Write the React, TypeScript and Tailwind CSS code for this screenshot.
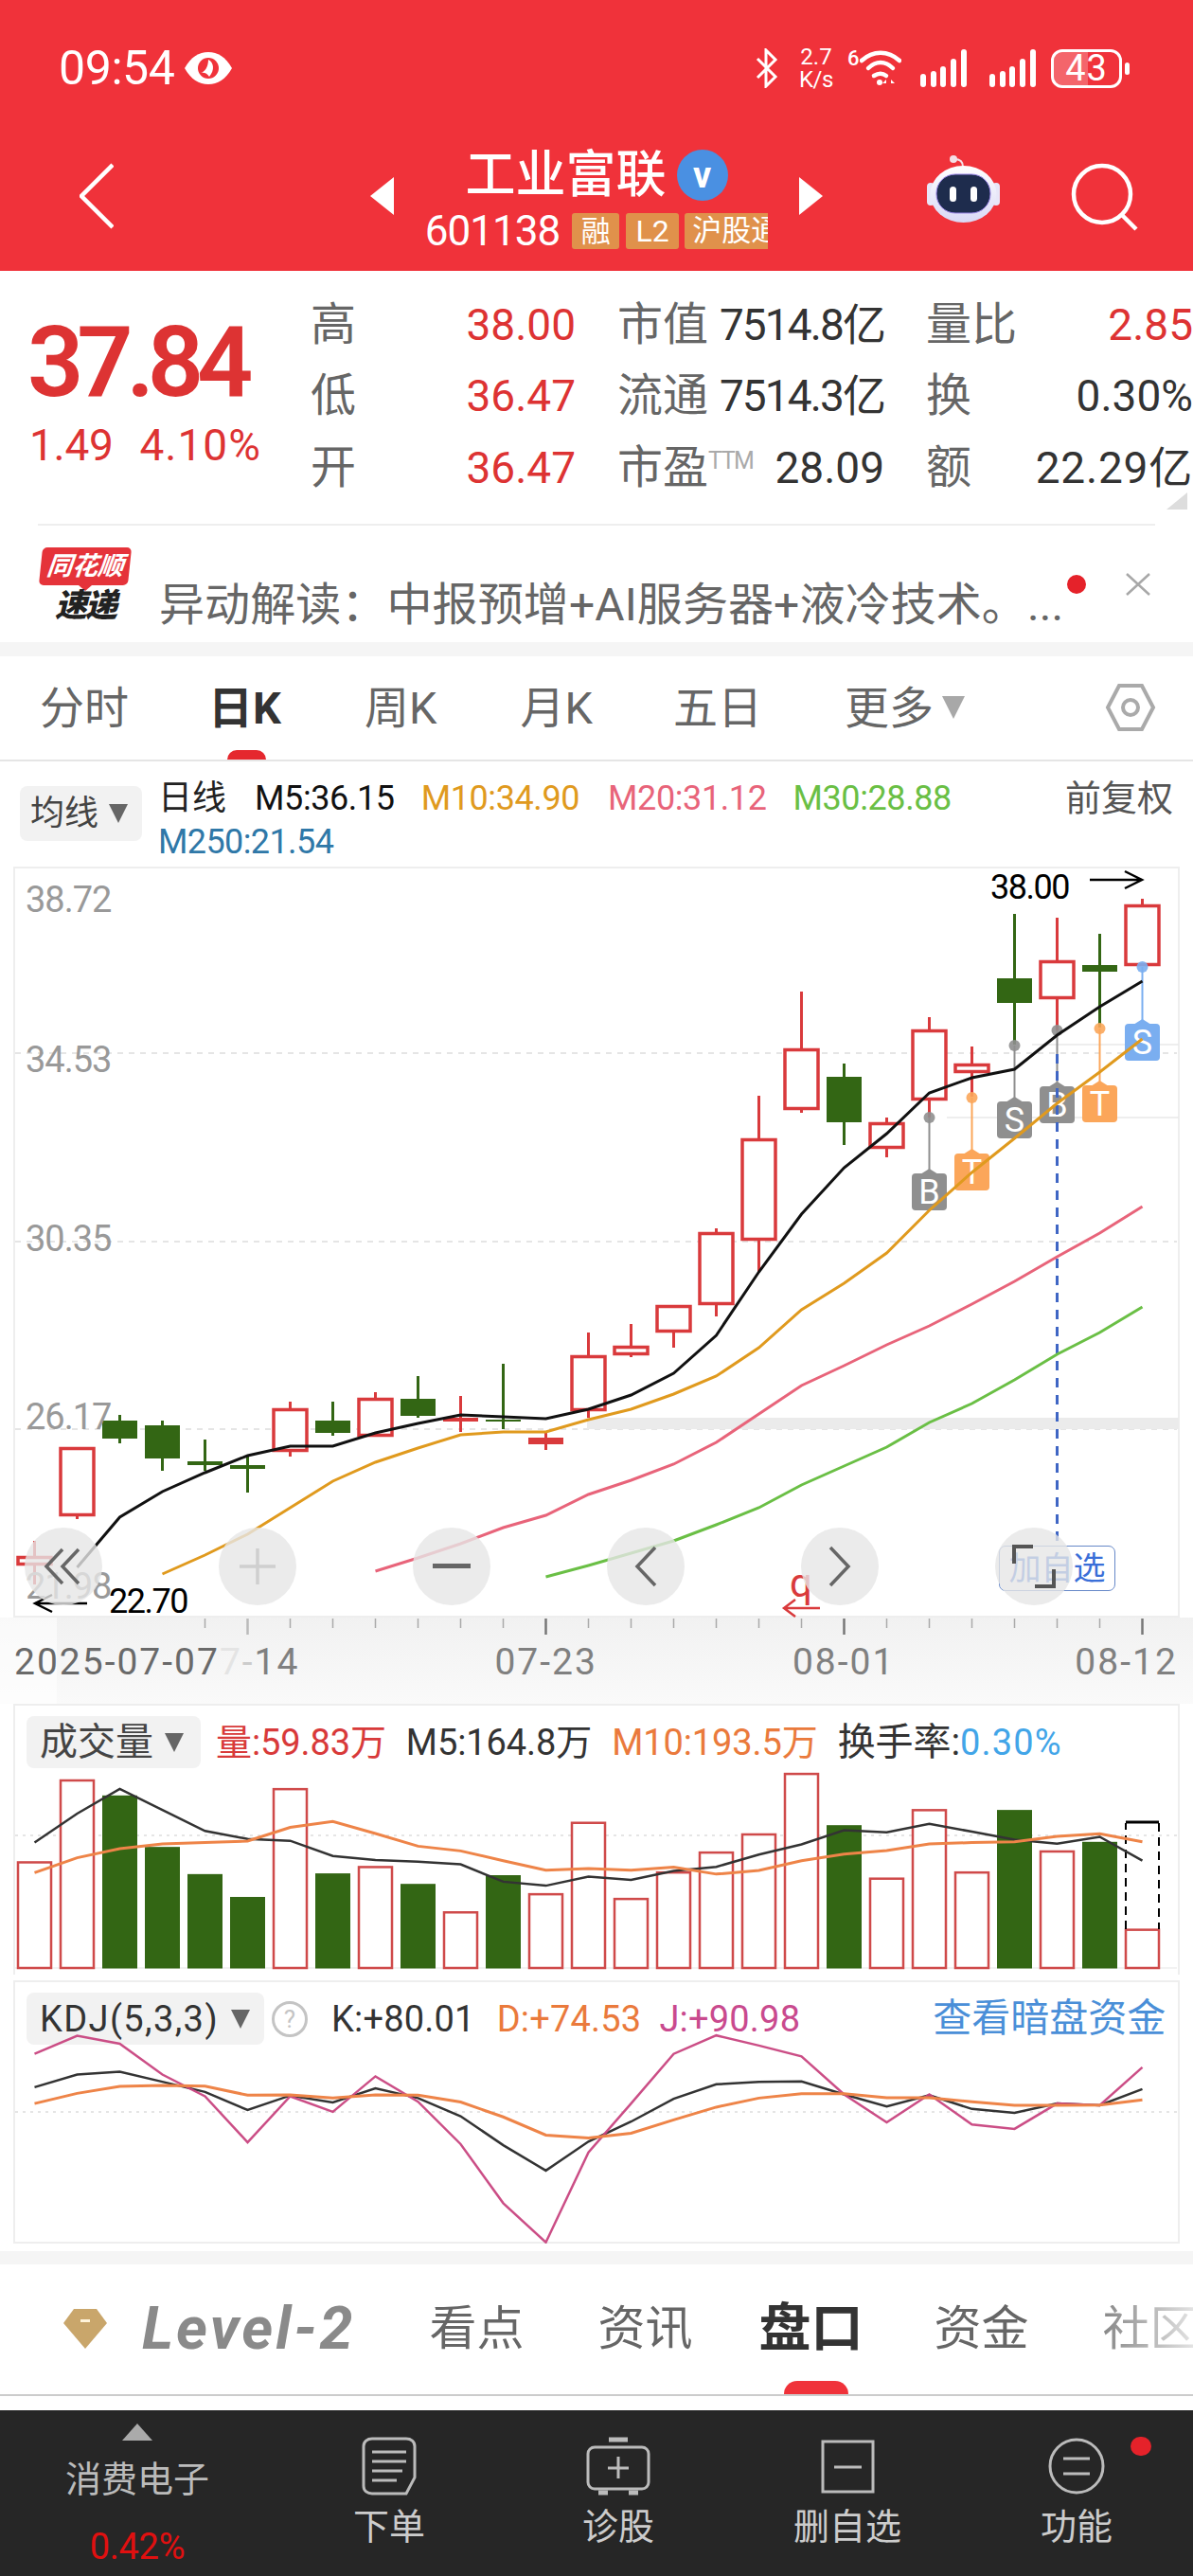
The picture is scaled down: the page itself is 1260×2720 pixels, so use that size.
import React from "react";

const X = (i: number) => 36.5 + 45 * i;
const pts = (list: [number, number][]) => list.map((p) => p.join(",")).join(" ");
const series = (ys: number[], toY: (z: number) => number) =>
  ys.map((z, i) => `${X(i)},${toY(z)}`).join(" ");

// kind, body top, body bottom, wick top, wick bottom
type Candle = ["r" | "g" | "R", number, number, number, number];
const candles: Candle[] = [
  ["r", 1643, 1653, 1627, 1673],
  ["r", 1528, 1601, 1528, 1604],
  ["g", 1500, 1519, 1494, 1524],
  ["g", 1505, 1540, 1500, 1553],
  ["g", 1543, 1547, 1520, 1553],
  ["g", 1547, 1551, 1538, 1576],
  ["r", 1487, 1533, 1480, 1538],
  ["g", 1500, 1513, 1480, 1516],
  ["r", 1476, 1517, 1470, 1517],
  ["g", 1477, 1495, 1453, 1497],
  ["R", 1497, 1501, 1474, 1512],
  ["g", 1499, 1501, 1440, 1509],
  ["R", 1518, 1525, 1513, 1531],
  ["r", 1431, 1490, 1407, 1497],
  ["r", 1421, 1431, 1398, 1433],
  ["r", 1378, 1407, 1378, 1423],
  ["r", 1301, 1378, 1297, 1390],
  ["r", 1202, 1310, 1157, 1343],
  ["r", 1107, 1172, 1047, 1175],
  ["g", 1137, 1185, 1123, 1209],
  ["r", 1185, 1213, 1180, 1222],
  ["r", 1087, 1162, 1074, 1180],
  ["r", 1123, 1133, 1105, 1158],
  ["g", 1033, 1059, 965, 1103],
  ["r", 1014, 1055, 969, 1088],
  ["g", 1019, 1026, 986, 1085],
  ["r", 955, 1020, 949, 1020],
];

const ma5: [number, number][] = [
  [81.5, 1655], [126.5, 1602], [171.5, 1575], [216.5, 1555], [261.5, 1537], [306.5, 1527], [351.5, 1527],
  [396.5, 1513], [441.5, 1503], [486.5, 1494], [531.5, 1496], [576.5, 1498], [621.5, 1488], [666.5, 1473],
  [711.5, 1450], [756.5, 1410], [801.5, 1343], [846.5, 1282], [891.5, 1233], [936.5, 1197], [981.5, 1154],
  [1026.5, 1138], [1071.5, 1129], [1116.5, 1093], [1161.5, 1063], [1206.5, 1036],
];
const ma10: [number, number][] = [
  [171.5, 1662], [216.5, 1642], [261.5, 1620], [306.5, 1592], [351.5, 1564], [396.5, 1544], [441.5, 1529],
  [486.5, 1515], [531.5, 1512], [576.5, 1512], [621.5, 1499], [666.5, 1488], [711.5, 1472], [756.5, 1453],
  [801.5, 1423], [846.5, 1383], [891.5, 1355], [936.5, 1323], [981.5, 1278], [1026.5, 1238], [1071.5, 1202],
  [1116.5, 1165], [1161.5, 1132], [1206.5, 1097],
];
const ma20: [number, number][] = [
  [396.5, 1659], [441.5, 1645], [486.5, 1630], [531.5, 1613], [576.5, 1600], [621.5, 1578], [666.5, 1563],
  [711.5, 1546], [756.5, 1523], [801.5, 1493], [846.5, 1463], [891.5, 1442], [936.5, 1420], [981.5, 1400],
  [1026.5, 1377], [1071.5, 1353], [1116.5, 1327], [1161.5, 1302], [1206.5, 1274],
];
const ma30: [number, number][] = [
  [576.5, 1665], [621.5, 1653], [666.5, 1640], [711.5, 1627], [756.5, 1610], [801.5, 1592], [846.5, 1568],
  [891.5, 1548], [936.5, 1528], [981.5, 1502], [1026.5, 1482], [1071.5, 1457], [1116.5, 1430], [1161.5, 1407],
  [1206.5, 1380],
];

const marks = [
  { x: 981.5, dot: 1180, box: 1239, label: "B", color: "#8f8f8f" },
  { x: 1026.5, dot: 1159, box: 1218, label: "T", color: "#fba65a" },
  { x: 1071.5, dot: 1104, box: 1163, label: "S", color: "#8f8f8f" },
  { x: 1116.5, dot: 1088, box: 1147, label: "B", color: "#8f8f8f" },
  { x: 1161.5, dot: 1086, box: 1146, label: "T", color: "#fba65a" },
  { x: 1206.5, dot: 1021, box: 1081, label: "S", color: "#7aaef0" },
];

const volTops = [482, 256, 300, 442, 517, 580, 280, 515, 495, 544, 620, 520, 570, 373, 583, 510, 455, 405, 238, 382, 527, 338, 510, 340, 452, 428, 668];
const volGreen = [2, 3, 4, 5, 7, 9, 11, 19, 23, 25];
const volBlack = [430, 350, 282, 340, 398, 420, 425, 467, 478, 483, 490, 538, 549, 524, 533, 508, 497, 463, 435, 396, 402, 378, 400, 422, 433, 414, 480];
const volOrange = [513, 472, 447, 434, 430, 426, 388, 372, 405, 440, 453, 480, 506, 502, 506, 498, 517, 507, 480, 462, 452, 434, 430, 428, 413, 406, 428];

const kBlack = [1105, 1070, 1062, 1090, 1118, 1168, 1128, 1147, 1108, 1135, 1185, 1265, 1335, 1255, 1200, 1137, 1097, 1090, 1089, 1125, 1158, 1127, 1165, 1176, 1150, 1155, 1110];
const kOrange = [1150, 1122, 1103, 1100, 1102, 1127, 1126, 1135, 1126, 1127, 1146, 1187, 1237, 1245, 1232, 1195, 1160, 1135, 1123, 1123, 1134, 1134, 1145, 1155, 1155, 1154, 1140];
const kPink = [1013, 963, 985, 1070, 1130, 1257, 1130, 1173, 1075, 1145, 1262, 1425, 1533, 1285, 1150, 1013, 962, 990, 1020, 1125, 1202, 1125, 1208, 1220, 1150, 1155, 1050];

const panelY = (z: number) => 1780 + z / 2.613;

function Caret({ className = "" }: { className?: string }) {
  return (
    <svg viewBox="0 0 20 20" className={className}>
      <path d="M0 0H20L10 20Z" fill="currentColor" />
    </svg>
  );
}

function Signal() {
  return (
    <svg width="49" height="40" viewBox="0 0 49 40" fill="#fff">
      <rect x="0" y="26" width="6" height="14" rx="3" />
      <rect x="11" y="23" width="6" height="17" rx="3" />
      <rect x="21" y="18" width="6" height="22" rx="3" />
      <rect x="32" y="10" width="6" height="30" rx="3" />
      <rect x="43" y="0" width="6" height="40" rx="3" />
    </svg>
  );
}

function StatusBar() {
  return (
    <div className="h-[148px] pt-[49px] pl-[62px] flex items-start text-white">
      <div className="flex items-center h-[46px] w-[188px] shrink-0">
        <span className="text-[50px] leading-none tracking-[-0.4px]">09:54</span>
        <svg width="52" height="36" viewBox="0 0 52 36" className="ml-[9px]">
          <path d="M1 18C8 6 16 1 26 1s18 5 25 17c-7 12-15 17-25 17S8 30 1 18Z" fill="#fff" />
          <circle cx="26" cy="18" r="11" fill="#f0323a" />
          <path d="M26 9c6 3 7 11 1 18-2-4-6-5-9-4 4-1 8-6 8-14Z" fill="#fff" />
        </svg>
      </div>
      <div className="flex items-center h-[46px] ml-[547px]">
        <svg width="26" height="42" viewBox="0 0 26 42" fill="none" stroke="#fff" strokeWidth="3">
          <path d="M3 11 22 30 12 40V2l10 10L3 31" />
        </svg>
        <div className="ml-[19px] w-[40px] flex flex-col items-center text-[24px] leading-[24px]">
          <span>2.7</span>
          <span className="tracking-[-0.5px]">K/s</span>
        </div>
        <span className="ml-[13px] text-[22px] leading-none font-medium self-start mt-[2px] w-[12px]">6</span>
        <svg width="44" height="40" viewBox="0 0 44 40" fill="none" stroke="#fff" strokeWidth="4.5" strokeLinecap="round" className="ml-[1px]">
          <path d="M2 12C14 1 30 1 42 12" />
          <path d="M9 20C17 12 27 12 35 20" />
          <path d="M15 28c5-3 9-3 13 0" />
          <circle cx="21" cy="35" r="3" fill="#fff" stroke="none" />
          <path d="M28 32l-4 4h4zM33 32l4 4h-4z" fill="#fff" stroke="none" />
        </svg>
        <div className="ml-[20px]"><Signal /></div>
        <div className="ml-[24px]"><Signal /></div>
        <div className="ml-[16px] relative w-[75px] h-[41px] rounded-[12px] border-[3px] border-white overflow-hidden flex items-center justify-center">
          <div className="absolute left-0 top-0 bottom-0 w-[36px] bg-white/25" />
          <span className="relative text-[38px] leading-none tracking-[1px]">43</span>
        </div>
        <div className="ml-[3px] w-[5px] h-[13px] rounded-full bg-white" />
      </div>
    </div>
  );
}

function Robot() {
  return (
    <svg width="80" height="72" viewBox="0 0 80 72">
      <defs>
        <linearGradient id="robotHead" x1="0" y1="0" x2="0" y2="1">
          <stop offset="0" stopColor="#ffffff" />
          <stop offset="1" stopColor="#d9d8f5" />
        </linearGradient>
      </defs>
      <circle cx="29" cy="5" r="4" fill="#f4dfe6" />
      <path d="M30 5c6 0 9 3 9 8" fill="none" stroke="#f4dfe6" strokeWidth="2" />
      <rect x="1" y="30" width="8" height="24" rx="4" fill="#e8e6f8" />
      <rect x="70" y="30" width="8" height="24" rx="4" fill="#e8e6f8" />
      <ellipse cx="39.5" cy="42" rx="35" ry="30" fill="url(#robotHead)" />
      <rect x="11" y="21" width="57" height="41" rx="20" fill="#1e2c4d" stroke="#9b86e8" strokeWidth="1" />
      <rect x="25" y="34" width="7" height="16" rx="3.5" fill="#fff" />
      <rect x="47" y="34" width="7" height="16" rx="3.5" fill="#fff" />
    </svg>
  );
}

function NavBar() {
  return (
    <div className="h-[118px] flex items-center text-white">
      <svg width="36" height="70" viewBox="0 0 36 70" fill="none" stroke="#fff" strokeWidth="4.5" className="ml-[84px] shrink-0">
        <path d="M35 2 2 35l33 33" />
      </svg>
      <svg width="25" height="40" viewBox="0 0 25 40" className="ml-[271px] shrink-0">
        <path d="M25 0V40L0 20Z" fill="#fff" />
      </svg>
      <div className="w-[428px] flex flex-col items-center">
        <div className="h-[68px] flex items-center">
          <span className="text-[53px] leading-none font-medium">工业富联</span>
          <span className="ml-[11px] w-[54px] h-[54px] rounded-full bg-[#4a90e2] flex items-center justify-center text-[38px] leading-none font-bold">v</span>
        </div>
        <div className="h-[38px] mt-[6px] flex items-center">
          <span className="text-[44px] leading-none tracking-[-1px]">601138</span>
          <span className="ml-[13px] w-[50px] h-[38px] rounded-[3px] bg-[#e0914b] flex items-center justify-center text-[31px] leading-none">融</span>
          <span className="ml-[7px] w-[56px] h-[38px] rounded-[3px] bg-[#e0914b] flex items-center justify-center text-[32px] leading-none">L2</span>
          <span className="ml-[6px] w-[88px] h-[38px] rounded-l-[3px] bg-[#e0914b] overflow-hidden pl-[8px] text-[31px] leading-[38px] whitespace-nowrap">沪股通</span>
        </div>
      </div>
      <svg width="25" height="40" viewBox="0 0 25 40" className="shrink-0">
        <path d="M0 0V40L25 20Z" fill="#fff" />
      </svg>
      <div className="ml-[109px] mt-[-16px] shrink-0"><Robot /></div>
      <svg width="72" height="72" viewBox="0 0 72 72" fill="none" stroke="#fff" strokeWidth="4.5" className="ml-[73px] mt-[2px] shrink-0">
        <circle cx="33" cy="33" r="30" />
        <path d="M54 55l15 15" />
      </svg>
    </div>
  );
}

function Stat({ label, value, red, sup, spacing = "" }: { label: string; value: string; red?: boolean; sup?: boolean; spacing?: string }) {
  return (
    <div className="h-[75.5px] flex items-center justify-between whitespace-nowrap">
      <span className="text-[48px] leading-none text-[#666] flex items-start">
        {label}
        {sup && <span className="text-[25px] leading-none text-[#aaa] tracking-[-1.5px] mt-[4px]">TTM</span>}
      </span>
      <span className={`text-[46px] leading-none ${red ? "text-[#dd3333]" : "text-[#333]"} ${spacing}`}>
        {value}
      </span>
    </div>
  );
}

function Quote() {
  return (
    <div className="h-[269px] relative">
      <div className="flex">
        <div className="w-[328px] shrink-0 pl-[29px] pt-[45px] text-[#dd3333]">
          <div className="text-[104px] leading-[104px] font-semibold tracking-[-7.2px]">37.84</div>
          <div className="mt-[12px] pl-[2px] text-[46px] leading-[46px] flex gap-[28px] tracking-[-0.3px]">
            <span>1.49</span>
            <span className="tracking-[1px]">4.10%</span>
          </div>
        </div>
        <div className="pt-[19px] flex w-[932px]">
          <div className="w-[280px]">
            <Stat label="高" value="38.00" red />
            <Stat label="低" value="36.47" red />
            <Stat label="开" value="36.47" red />
          </div>
          <div className="w-[282px] ml-[44px]">
            <Stat label="市值" value="7514.8亿" spacing="tracking-[-1.9px]" />
            <Stat label="流通" value="7514.3亿" spacing="tracking-[-1.9px]" />
            <Stat label="市盈" value="28.09" sup />
          </div>
          <div className="w-[282px] ml-[44px]">
            <Stat label="量比" value="2.85" red />
            <Stat label="换" value="0.30%" />
            <Stat label="额" value="22.29亿" spacing="tracking-[0.8px]" />
          </div>
        </div>
      </div>
      <svg width="22" height="18" viewBox="0 0 22 18" className="absolute right-[6px] top-[234px]">
        <path d="M22 0V18H0Z" fill="#dddddd" />
      </svg>
      <div className="absolute left-[40px] right-[40px] bottom-0 h-[2px] bg-[#eeeeee]" />
    </div>
  );
}

function Ticker() {
  return (
    <div className="h-[123px] flex items-start">
      <div className="ml-[42px] mt-[23px] w-[96px] shrink-0 flex flex-col items-center">
        <div className="w-[94px] h-[40px] rounded-[5px] bg-[#e5333a] -skew-x-6 flex items-center justify-center text-white text-[27px] leading-none font-bold italic">同花顺</div>
        <div className="w-0 h-0 border-x-[7px] border-x-transparent border-t-[6px] border-t-[#e5333a]" />
        <div className="mt-[-2px] text-[34px] leading-[34px] font-black italic text-[#222] tracking-[-2px]">速递</div>
      </div>
      <div className="ml-[30px] mt-[56px] text-[48px] leading-[56px] text-[#666] whitespace-nowrap tracking-[0.1px]">异动解读：中报预增+AI服务器+液冷技术。...</div>
      <div className="ml-[4px] mt-[52px] w-[20px] h-[20px] rounded-full bg-[#e5222a] shrink-0" />
      <svg width="26" height="24" viewBox="0 0 26 24" fill="none" stroke="#a8a8a8" strokeWidth="2.5" className="ml-[42px] mt-[50px] shrink-0">
        <path d="M1 1l24 22M25 1 1 23" />
      </svg>
    </div>
  );
}

function Tabs() {
  return (
    <div className="h-[111px] border-b-2 border-[#e5e5e5] relative flex items-center pl-[42px] pb-[1px] text-[#666] text-[47px] leading-none">
      <span>分时</span>
      <span className="ml-[84px] font-bold text-[#333]">日K</span>
      <span className="ml-[88px]">周K</span>
      <span className="ml-[88px]">月K</span>
      <span className="ml-[85px]">五日</span>
      <span className="ml-[87px]">更多</span>
      <Caret className="ml-[8px] w-[26px] h-[24px] text-[#a8a8a8]" />
      <svg width="54" height="52" viewBox="0 0 54 52" fill="none" stroke="#aaaaaa" strokeWidth="4" className="ml-[147px] shrink-0">
        <path d="M15 3h24l12 23-12 23H15L3 26Z" />
        <circle cx="27" cy="26" r="8" />
      </svg>
      <div className="absolute left-[240px] bottom-0 w-[41px] h-[10px] rounded-t-full bg-[#e5282e]" />
    </div>
  );
}

function Legend() {
  return (
    <div className="h-[111px] flex items-start pl-[21px] text-[36px] leading-none">
      <div className="mt-[26px] w-[129px] h-[58px] rounded-[8px] bg-[#f2f2f2] flex items-center pl-[11px] text-[#444]">
        均线
        <Caret className="ml-[11px] w-[20px] h-[20px] text-[#666]" />
      </div>
      <div className="ml-[17px] mt-[21px] flex flex-col">
        <div className="flex items-center h-[36px] text-[36px] tracking-[-0.4px] whitespace-nowrap">
          <span className="text-[#222] tracking-normal">日线</span>
          <span className="ml-[30px] text-[#111]">M5:36.15</span>
          <span className="ml-[28px] text-[#e09a1e]">M10:34.90</span>
          <span className="ml-[30px] text-[#e8647a]">M20:31.12</span>
          <span className="ml-[28px] text-[#6abf45]">M30:28.88</span>
          <span className="ml-[120px] text-[38px] text-[#555] tracking-normal">前复权</span>
        </div>
        <div className="mt-[10px] text-[#2f78a8] tracking-[-0.6px]">M250:21.54</div>
      </div>
    </div>
  );
}

function CandleChart() {
  return (
    <svg width="1260" height="793" viewBox="0 915 1260 793" className="absolute left-0 top-0" fill="none">
      {[1112, 1311, 1509].map((y) => (
        <line key={y} x1="16" x2="1243" y1={y} y2={y} stroke="#dddddd" strokeWidth="1.5" strokeDasharray="6 6" />
      ))}
      <rect x="620" y="1497" width="625" height="12" fill="#ebebeb" />
      <line x1="1090" x2="1245" y1="1103" y2="1103" stroke="#e8e8e8" strokeWidth="1.5" />
      <line x1="1000" x2="1245" y1="1180" y2="1180" stroke="#e8e8e8" strokeWidth="1.5" />
      {candles.map(([kind, top, bottom, wt, wb], i) => {
        const x = X(i);
        const color = kind === "g" ? "#336614" : "#d93a3c";
        return (
          <g key={i}>
            <line x1={x} x2={x} y1={wt} y2={top} stroke={color} strokeWidth="3" />
            <line x1={x} x2={x} y1={bottom} y2={wb} stroke={color} strokeWidth="3" />
            {kind === "r" ? (
              <rect x={x - 17.5} y={top + 1.5} width="35" height={bottom - top - 3} stroke={color} strokeWidth="3.5" fill="#fff" />
            ) : (
              <rect x={x - 18.5} y={top} width="37" height={bottom - top} fill={color} />
            )}
            {kind === "g" && bottom - top < 12 && <line x1={x} x2={x} y1={wt} y2={wb} stroke={color} strokeWidth="3" />}
          </g>
        );
      })}
      {marks.map((m) => (
        <g key={m.x}>
          <line x1={m.x} x2={m.x} y1={m.dot} y2={m.box} stroke={m.color} strokeWidth="2" />
          <circle cx={m.x} cy={m.dot} r="6" fill={m.color} fillOpacity="0.9" />
          <path d={`M${m.x} ${m.box - 5}l8 5h-16Z`} fill={m.color} />
          <rect x={m.x - 18.5} y={m.box} width="37" height="39" rx="4" fill={m.color} />
          <text x={m.x} y={m.box + 32} textAnchor="middle" fontSize="36" fill="#fff">{m.label}</text>
        </g>
      ))}
      <line x1="1116.5" x2="1116.5" y1="1113" y2="1632" stroke="#3f66c4" strokeWidth="3" strokeDasharray="10 8" />
      <polyline points={pts(ma30)} stroke="#6abf45" strokeWidth="3" />
      <polyline points={pts(ma20)} stroke="#e8647a" strokeWidth="3" />
      <polyline points={pts(ma10)} stroke="#e09a1e" strokeWidth="3" />
      <polyline points={pts(ma5)} stroke="#111111" strokeWidth="3" />
      <path d="M1151 929h55m-18-9 18 9-18 9" stroke="#000" strokeWidth="2.5" />
      <path d="M92 1693H37m18-9-18 9 18 9" stroke="#000" strokeWidth="2.5" />
      <path d="M866 1698h-38m12-9-12 9 12 9" stroke="#d93a3c" strokeWidth="2.5" />
    </svg>
  );
}

function RoundButton({ children, className }: { children: React.ReactNode; className: string }) {
  return (
    <div className={`absolute top-[698px] w-[82px] h-[82px] rounded-full bg-[#e6e6e6]/80 flex items-center justify-center ${className}`}>
      {children}
    </div>
  );
}

function Chart() {
  const axisLabel = "absolute left-[27px] text-[38px] leading-none text-[#999] tracking-[-1px]";
  return (
    <div className="h-[793px] relative">
      <div className="mx-[14px] h-full border-2 border-[#eeeeee]" />
      <CandleChart />
      <span className={`${axisLabel} top-[16px]`}>38.72</span>
      <span className={`${axisLabel} top-[185px]`}>34.53</span>
      <span className={`${axisLabel} top-[374px]`}>30.35</span>
      <span className={`${axisLabel} top-[562px]`}>26.17</span>
      <span className={`${axisLabel} top-[741px]`}>21.98</span>
      <span className="absolute left-[1046px] top-[4px] text-[36px] leading-none tracking-[-1.5px] text-black">38.00</span>
      <span className="absolute left-[115px] top-[758px] text-[36px] leading-none tracking-[-1.5px] text-black">22.70</span>
      <span className="absolute left-[834px] top-[736px] text-[42px] leading-none text-[#d93a3c]">q</span>
      <div className="absolute left-[1055px] top-[717px] w-[123px] h-[48px] rounded-[7px] border-[1.5px] border-[#6688c8] flex items-center justify-center text-[34px] leading-none text-[#3a6fd8]">加自选</div>
      <RoundButton className="left-[26px]">
        <svg width="42" height="42" viewBox="0 0 42 42" fill="none" stroke="#666" strokeWidth="3.5"><path d="M20 3 3 21l17 18M37 3 20 21l17 18" /></svg>
      </RoundButton>
      <RoundButton className="left-[231px]">
        <svg width="40" height="40" viewBox="0 0 40 40" fill="none" stroke="#cfcfcf" strokeWidth="3.5"><path d="M20 1v38M1 20h38" /></svg>
      </RoundButton>
      <RoundButton className="left-[436px]">
        <svg width="40" height="8" viewBox="0 0 40 8"><rect y="1" width="40" height="5" fill="#666" /></svg>
      </RoundButton>
      <RoundButton className="left-[641px]">
        <svg width="24" height="44" viewBox="0 0 24 44" fill="none" stroke="#666" strokeWidth="3.5"><path d="M22 2 3 22l19 20" /></svg>
      </RoundButton>
      <RoundButton className="left-[846px]">
        <svg width="24" height="44" viewBox="0 0 24 44" fill="none" stroke="#666" strokeWidth="3.5"><path d="M2 2l19 20L2 42" /></svg>
      </RoundButton>
      <RoundButton className="left-[1051px]">
        <svg width="46" height="46" viewBox="0 0 46 46" fill="none" stroke="#555" strokeWidth="4"><path d="M2 20V2h20M44 26v18H24" /></svg>
      </RoundButton>
    </div>
  );
}

function AxisRow() {
  const ticks = Array.from({ length: 27 }, (_, i) => i);
  return (
    <div className="h-[91px] relative bg-linear-to-b from-[#f1f1f1] to-[#fafafa]">
      <svg width="1260" height="30" viewBox="0 0 1260 30" className="absolute left-0 top-0">
        {ticks.map((i) => {
          if (i < 4) return null;
          const major = (i - 5) % 7 === 0;
          return <line key={i} x1={X(i)} x2={X(i)} y1="1" y2={major ? 18 : 11} stroke={i === 5 ? "#bbb" : major ? "#777" : "#aaa"} strokeWidth={major ? 2.5 : 1.5} />;
        })}
      </svg>
      <div className="absolute left-0 top-0 bottom-0 w-[60px] bg-white/60" />
      <div className="relative pt-[28px] pl-[15px] flex text-[39px] leading-none text-[#808080] tracking-[2px] whitespace-nowrap">
        <span className="text-[#6a6a6a]">2025-07-07</span>
        <span className="ml-[0px]"><span className="text-[#e4e4e4]">7</span><span className="text-[#cccccc]">-</span>14</span>
        <span className="ml-[206px]">07-23</span>
        <span className="ml-[206px]">08-01</span>
        <span className="ml-[190px]">08-12</span>
      </div>
    </div>
  );
}

function VolumePanel() {
  return (
    <div className="h-[286px] relative">
      <div className="mx-[14px] h-full border-x-2 border-t-2 border-[#eeeeee] pt-[11px] pl-[12px]">
        <div className="flex items-center text-[38px] leading-none tracking-[-0.1px] whitespace-nowrap h-[55px]">
          <div className="w-[184px] h-[55px] rounded-[8px] bg-[#f2f2f2] flex items-center pl-[14px] text-[40px] text-[#444] tracking-normal">
            成交量
            <Caret className="ml-[11px] w-[22px] h-[20px] text-[#666]" />
          </div>
          <span className="ml-[16px] text-[#d83a3a]">量:59.83万</span>
          <span className="ml-[21px] text-[#333]">M5:164.8万</span>
          <span className="ml-[21px] text-[#ea7a3c]">M10:193.5万</span>
          <span className="ml-[21px] text-[40px] text-[#333]">换手率:</span>
          <span className="text-[#42a5e8] tracking-[1.2px]">0.30%</span>
        </div>
      </div>
      <svg width="1260" height="286" viewBox="0 1798 1260 286" className="absolute left-0 top-0" fill="none">
        <line x1="16" x2="1243" y1="1937" y2="1937" stroke="#dddddd" strokeWidth="1.5" strokeDasharray="3 5" />
        <line x1="16" x2="1243" y1="2077" y2="2077" stroke="#eeeeee" strokeWidth="1.5" />
        {volTops.map((z, i) => {
          const top = panelY(z);
          return volGreen.includes(i) ? (
            <rect key={i} x={X(i) - 18.5} y={top} width="37" height={2077.5 - top} fill="#336614" />
          ) : (
            <rect key={i} x={X(i) - 17.5} y={top + 1} width="35" height={2076 - top} fill="#fff" stroke="#cf4a4a" strokeWidth="2.5" />
          );
        })}
        <path d="M1189 2036V1924M1224 1924V2036" stroke="#000" strokeWidth="2" strokeDasharray="9 6" />
        <path d="M1189 1923H1224" stroke="#000" strokeWidth="3" />
        <polyline points={series(volBlack, panelY)} stroke="#333333" strokeWidth="2.5" />
        <polyline points={series(volOrange, panelY)} stroke="#ee8448" strokeWidth="3" />
      </svg>
    </div>
  );
}

function KdjPanel() {
  return (
    <div className="h-[278px] mt-[6px] relative">
      <div className="mx-[14px] h-full border-2 border-[#eeeeee] pt-[11px] pl-[12px]">
        <div className="flex items-center text-[38px] leading-none tracking-[0.2px] whitespace-nowrap h-[55px]">
          <div className="w-[251px] h-[55px] rounded-[8px] bg-[#f2f2f2] flex items-center pl-[14px] text-[#333] tracking-[1.4px]">
            KDJ(5,3,3)
            <Caret className="ml-[13px] w-[20px] h-[20px] text-[#666]" />
          </div>
          <div className="ml-[8px] w-[38px] h-[38px] rounded-full border-[3px] border-[#c4c4c4] flex items-center justify-center text-[26px] text-[#c4c4c4]">?</div>
          <span className="ml-[25px] text-[#333]">K:+80.01</span>
          <span className="ml-[23px] text-[#ea7a3c]">D:+74.53</span>
          <span className="ml-[19px] text-[#c94a8e]">J:+90.98</span>
          <span className="ml-[140px] text-[41px] text-[#4a8fd8] tracking-normal">查看暗盘资金</span>
        </div>
      </div>
      <svg width="1260" height="278" viewBox="0 2090 1260 278" className="absolute left-0 top-0" fill="none">
        <line x1="16" x2="1243" y1="2229" y2="2229" stroke="#dddddd" strokeWidth="1.5" strokeDasharray="3 5" />
        <polyline points={series(kBlack, panelY)} stroke="#333333" strokeWidth="2.5" />
        <polyline points={series(kPink, panelY)} stroke="#c8457f" strokeWidth="2.5" opacity="0.95" />
        <polyline points={series(kOrange, panelY)} stroke="#ee8448" strokeWidth="3" />
      </svg>
    </div>
  );
}

function BottomTabs() {
  return (
    <div className="h-[139px] border-b-2 border-[#cccccc] relative flex items-center pb-[2px] text-[50px] leading-none text-[#666] whitespace-nowrap">
      <svg width="48" height="44" viewBox="0 0 48 44" className="ml-[66px] shrink-0">
        <path d="M12 1h24l11 15-23 27L1 16Z" fill="#c9a66b" />
        <rect x="19" y="12" width="10" height="3" fill="#fff3da" />
      </svg>
      <span className="ml-[36px] text-[63px] font-bold italic text-[#8a8a8a] tracking-[3px]">Level-2</span>
      <span className="ml-[78px]">看点</span>
      <span className="ml-[78px]">资讯</span>
      <span className="ml-[70px] text-[55px] font-bold text-[#333]">盘口</span>
      <span className="ml-[75px]">资金</span>
      <span className="ml-[78px] shrink-0 bg-linear-to-r from-[#888888] to-[#e8e8e8] bg-clip-text text-transparent">社区</span>
      <div className="absolute left-[828px] bottom-0 w-[68px] h-[14px] rounded-t-full bg-[#f0323a]" />
    </div>
  );
}

function DockItem({ label, children }: { label: string; children: React.ReactNode }) {
  return (
    <div className="w-[242px] flex flex-col items-center pt-[28px] relative">
      <div className="h-[62px] flex items-center justify-center">{children}</div>
      <span className="mt-[14px] text-[38px] leading-[38px] text-[#cccccc]">{label}</span>
    </div>
  );
}

function Dock() {
  return (
    <div className="h-[176px] bg-[#262626] flex">
      <div className="w-[290px] flex flex-col items-center">
        <svg width="32" height="18" viewBox="0 0 32 18" className="mt-[14px]">
          <path d="M16 0 32 18H0Z" fill="#aaaaaa" />
        </svg>
        <span className="mt-[22px] text-[38px] leading-[38px] text-[#bbbbbb]">消费电子</span>
        <span className="mt-[33px] text-[38px] leading-[38px] text-[#e01010] tracking-[-0.3px]">0.42%</span>
      </div>
      <DockItem label="下单">
        <svg width="58" height="62" viewBox="0 0 58 62" fill="none" stroke="#bbbbbb" strokeWidth="3">
          <path d="M11 2h36c5 0 9 3 9 8v33l-9 17H11c-5 0-9-3-9-8V10c0-5 4-8 9-8Z" />
          <path d="M11 16h36M11 26h36M11 36h32M11 46h26" />
        </svg>
      </DockItem>
      <DockItem label="诊股">
        <svg width="68" height="62" viewBox="0 0 68 62" fill="none" stroke="#bbbbbb" strokeWidth="3">
          <path d="M24 3h20" strokeWidth="5" />
          <rect x="2" y="11" width="64" height="44" rx="7" />
          <path d="M34 21v23M23 33h22" />
          <path d="M13 59h10M45 59h10" strokeWidth="5" />
        </svg>
      </DockItem>
      <DockItem label="删自选">
        <svg width="57" height="57" viewBox="0 0 57 57" fill="none" stroke="#bbbbbb" strokeWidth="3">
          <rect x="2" y="2" width="53" height="53" />
          <path d="M14 29h29" />
        </svg>
      </DockItem>
      <DockItem label="功能">
        <svg width="60" height="60" viewBox="0 0 60 60" fill="none" stroke="#bbbbbb" strokeWidth="3">
          <circle cx="30" cy="30" r="28" />
          <path d="M16 22h28M16 38h28" />
        </svg>
        <div className="absolute left-[178px] top-[28px] w-[22px] h-[20px] rounded-full bg-[#e5222a]" />
      </DockItem>
    </div>
  );
}

export default function App() {
  return (
    <div className="w-[1260px] h-[2720px] bg-white overflow-hidden font-[Roboto,'Noto_Sans_CJK_SC',sans-serif]">
      <div className="h-[286px] bg-[#f0323a]">
        <StatusBar />
        <NavBar />
      </div>
      <Quote />
      <Ticker />
      <div className="h-[15px] bg-[#f5f5f5]" />
      <Tabs />
      <Legend />
      <Chart />
      <AxisRow />
      <VolumePanel />
      <KdjPanel />
      <div className="h-[8px]" />
      <div className="h-[14px] bg-[#f5f5f5]" />
      <BottomTabs />
      <div className="h-[15px]" />
      <Dock />
    </div>
  );
}
